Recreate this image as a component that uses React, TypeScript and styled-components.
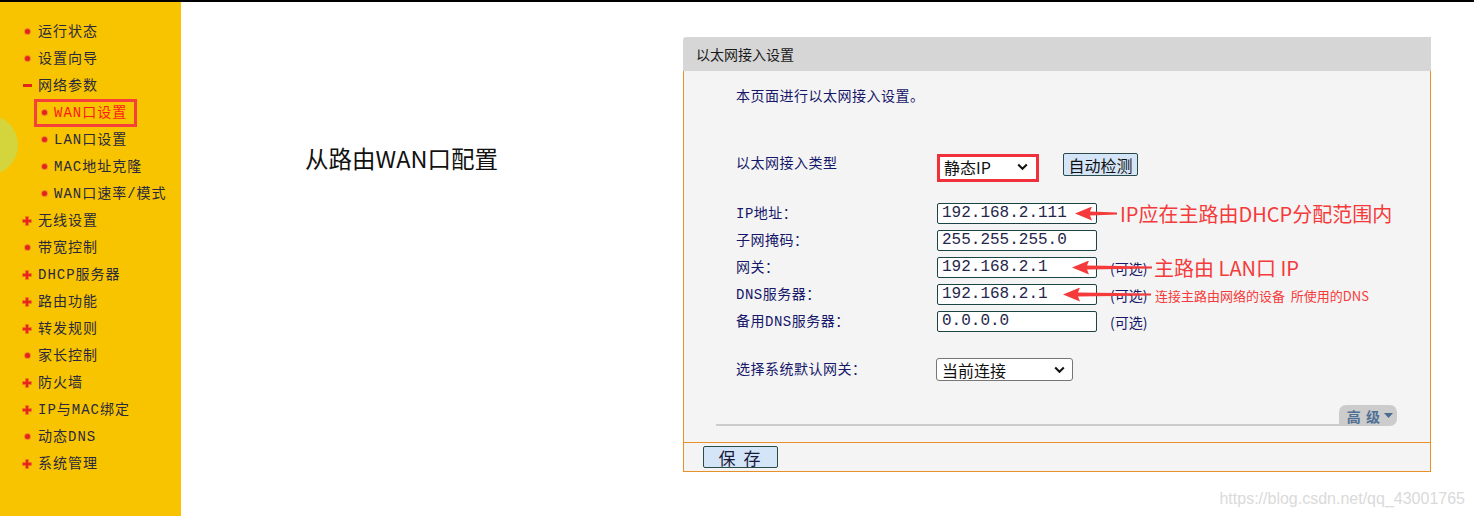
import React from 'react';
import styled, { createGlobalStyle } from 'styled-components';

const GlobalStyle = createGlobalStyle`
	html, body {
		margin: 0;
		padding: 0;
		background: #ffffff;
	}
	body {
		font-family: 'Noto Sans CJK SC', sans-serif;
	}
`;

const orange = '#e8902a';
const navy = '#16166a';
const annotationRed = '#f43a3a';

type BulletKind = 'dot' | 'plus' | 'minus';

interface MenuEntry {
	label: string;
	bullet: BulletKind;
	sub?: boolean;
	active?: boolean;
}

const menu: MenuEntry[] = [
	{ label: '运行状态', bullet: 'dot' },
	{ label: '设置向导', bullet: 'dot' },
	{ label: '网络参数', bullet: 'minus' },
	{ label: 'WAN口设置', bullet: 'dot', sub: true, active: true },
	{ label: 'LAN口设置', bullet: 'dot', sub: true },
	{ label: 'MAC地址克隆', bullet: 'dot', sub: true },
	{ label: 'WAN口速率/模式', bullet: 'dot', sub: true },
	{ label: '无线设置', bullet: 'plus' },
	{ label: '带宽控制', bullet: 'dot' },
	{ label: 'DHCP服务器', bullet: 'plus' },
	{ label: '路由功能', bullet: 'plus' },
	{ label: '转发规则', bullet: 'plus' },
	{ label: '家长控制', bullet: 'dot' },
	{ label: '防火墙', bullet: 'plus' },
	{ label: 'IP与MAC绑定', bullet: 'plus' },
	{ label: '动态DNS', bullet: 'dot' },
	{ label: '系统管理', bullet: 'plus' },
];

interface Note {
	arrowLeft: number;
	arrowLength: number;
	textLeft: number;
	text: string;
	small?: boolean;
}

interface Field {
	label: string;
	value: string;
	optional?: boolean;
	note?: Note;
}

const fields: Field[] = [
	{
		label: 'IP地址：',
		value: '192.168.2.111',
		note: { arrowLeft: 339, arrowLength: 42, textLeft: 384, text: 'IP应在主路由DHCP分配范围内' },
	},
	{ label: '子网掩码：', value: '255.255.255.0' },
	{
		label: '网关：',
		value: '192.168.2.1',
		optional: true,
		note: { arrowLeft: 336, arrowLength: 80, textLeft: 418, text: '主路由 LAN口 IP' },
	},
	{
		label: 'DNS服务器：',
		value: '192.168.2.1',
		optional: true,
		note: {
			arrowLeft: 327,
			arrowLength: 88,
			textLeft: 419,
			text: '连接主路由网络的设备\u00a0\u00a0所使用的DNS',
			small: true,
		},
	},
	{ label: '备用DNS服务器：', value: '0.0.0.0', optional: true },
];

const Bullet = ({ kind }: { kind: BulletKind }) => (
	<BulletBox>
		{kind === 'dot' && <Dot />}
		{kind === 'plus' && (
			<svg width='10' height='10' viewBox='0 0 10 10'>
				<path d='M3.5 0.5h3v3h3v3h-3v3h-3v-3h-3v-3h3z' fill='#e8261c' stroke='#f07a2a' strokeWidth='0.6' />
			</svg>
		)}
		{kind === 'minus' && <Minus />}
	</BulletBox>
);

const Chevron = () => (
	<svg width='11' height='8' viewBox='0 0 11 8'>
		<path d='M1.2 1.5 L5.5 5.8 L9.8 1.5' fill='none' stroke='#111' strokeWidth='2' />
	</svg>
);

const Annotation = ({ note }: { note: Note }) => (
	<>
		<Arrow $left={note.arrowLeft} $length={note.arrowLength} />
		{note.small ? (
			<SmallNote $left={note.textLeft}>{note.text}</SmallNote>
		) : (
			<BigNote $left={note.textLeft}>{note.text}</BigNote>
		)}
	</>
);

export default function App() {
	return (
		<Page>
			<GlobalStyle />
			<Sidebar>
				<Blob />
				<Menu>
					{menu.map((item) => (
						<MenuRow key={item.label} $sub={!!item.sub}>
							<MenuItem $active={!!item.active} $sub={!!item.sub}>
								<Bullet kind={item.bullet} />
								<MenuLabel $active={!!item.active}>{item.label}</MenuLabel>
							</MenuItem>
						</MenuRow>
					))}
				</Menu>
			</Sidebar>
			<Main>
				<Heading>从路由WAN口配置</Heading>
				<Panel>
					<PanelHeader>以太网接入设置</PanelHeader>
					<PanelBody>
						<Form>
							<Intro>本页面进行以太网接入设置。</Intro>
							<TypeRow>
								<Label>以太网接入类型</Label>
								<HighlightBox>
									<SelectText>静态IP</SelectText>
									<Chevron />
								</HighlightBox>
								<Button>自动检测</Button>
							</TypeRow>
							<FieldList>
								{fields.map((f) => (
									<FieldRow key={f.label}>
										<Label>{f.label}</Label>
										<TextInput>{f.value}</TextInput>
										{f.optional && <Optional>(可选)</Optional>}
										{f.note && <Annotation note={f.note} />}
									</FieldRow>
								))}
							</FieldList>
							<GatewayRow>
								<Label>选择系统默认网关：</Label>
								<Select>
									<SelectText>当前连接</SelectText>
									<Chevron />
								</Select>
							</GatewayRow>
						</Form>
						<AdvancedBar>
							<Rule />
							<AdvancedTab>
								高 级
								<svg width='9' height='6' viewBox='0 0 9 6'>
									<path d='M0 0h9L4.5 5z' fill='#4a6a90' />
								</svg>
							</AdvancedTab>
						</AdvancedBar>
					</PanelBody>
					<PanelFooter>
						<SaveButton>保 存</SaveButton>
					</PanelFooter>
				</Panel>
				<Watermark>https://blog.csdn.net/qq_43001765</Watermark>
			</Main>
		</Page>
	);
}

const Page = styled.div`
	display: flex;
	width: 1474px;
	height: 516px;
	box-sizing: border-box;
	border-top: 2px solid #000;
	overflow: hidden;
`;

const Sidebar = styled.aside`
	position: relative;
	width: 181px;
	flex-shrink: 0;
	background: #f8c400;
	overflow: hidden;
`;

const Blob = styled.div`
	position: absolute;
	left: -42px;
	top: 113px;
	width: 60px;
	height: 60px;
	border-radius: 50%;
	background: #d4d43c;
`;

const Menu = styled.ul`
	position: relative;
	list-style: none;
	margin: 0;
	padding: 16px 0 0;
`;

const MenuRow = styled.li<{ $sub: boolean }>`
	display: flex;
	align-items: center;
	height: 27px;
	padding-left: ${(p) => (p.$sub ? '34px' : '22px')};
`;

const MenuItem = styled.div<{ $active: boolean; $sub: boolean }>`
	display: flex;
	align-items: center;
	gap: ${(p) => (p.$sub ? '5px' : '6px')};
	box-sizing: border-box;
	height: ${(p) => (p.$sub ? '28px' : 'auto')};
	width: ${(p) => (p.$active ? '103px' : 'auto')};
	padding-left: ${(p) => (p.$sub ? '2px' : '0')};
	border: ${(p) => (p.$sub ? '3px solid' : 'none')};
	border-color: ${(p) => (p.$active ? '#f5413a' : 'transparent')};
`;

const BulletBox = styled.span`
	display: flex;
	align-items: center;
	justify-content: center;
	width: 10px;
	height: 10px;
`;

const Dot = styled.span`
	width: 5px;
	height: 5px;
	border-radius: 50%;
	background: #e3241c;
	box-shadow: 0 0 0 1px #f08a2a;
`;

const Minus = styled.span`
	width: 9px;
	height: 3px;
	background: #e3241c;
`;

const MenuLabel = styled.span<{ $active: boolean }>`
	font-family: 'Liberation Mono', 'Noto Sans CJK SC', monospace;
	font-size: 14px;
	letter-spacing: 1px;
	line-height: 20px;
	white-space: nowrap;
	color: ${(p) => (p.$active ? '#ff1a1a' : '#2a2a3c')};
`;

const Main = styled.main`
	position: relative;
	display: flex;
	flex: 1;
`;

const Heading = styled.h1`
	width: 378px;
	flex-shrink: 0;
	margin: 0;
	padding: 141px 0 0 124px;
	font-size: 23.5px;
	font-weight: 400;
	line-height: 30px;
	white-space: nowrap;
	color: #111;
`;

const Panel = styled.section`
	display: flex;
	flex-direction: column;
	width: 748px;
	margin-top: 35px;
	align-self: flex-start;
	background: #f4f4f4;
`;

const PanelHeader = styled.div`
	height: 34px;
	display: flex;
	align-items: center;
	padding-left: 13px;
	background: #d6d6d6;
	border-top-left-radius: 4px;
	font-size: 14px;
	color: #1a1a1a;
`;

const PanelBody = styled.div`
	height: 371px;
	box-sizing: border-box;
	border-left: 1px solid ${orange};
	border-right: 1px solid ${orange};
	display: flex;
	flex-direction: column;
`;

const Form = styled.div`
	padding-left: 52px;
	font-family: 'Liberation Mono', 'Noto Sans CJK SC', monospace;
	font-size: 14px;
	color: ${navy};
`;

const Intro = styled.div`
	margin-top: 16px;
	line-height: 20px;
	letter-spacing: 0.5px;
`;

const Label = styled.span`
	width: 201px;
	flex-shrink: 0;
	line-height: 20px;
	letter-spacing: 0.5px;
	white-space: nowrap;
`;

const TypeRow = styled.div`
	display: flex;
	align-items: flex-start;
	margin-top: 47px;
	height: 35px;
`;

const HighlightBox = styled.div`
	display: flex;
	align-items: center;
	justify-content: space-between;
	box-sizing: border-box;
	width: 102px;
	height: 28px;
	padding: 0 8px 2px 4px;
	border: 3px solid #f0303a;
	background: #fff;
`;

const SelectText = styled.span`
	font-family: 'Noto Sans CJK SC', sans-serif;
	font-size: 16px;
	color: #111;
	line-height: 20px;
`;

const Button = styled.div`
	display: flex;
	align-items: center;
	justify-content: center;
	box-sizing: border-box;
	width: 75px;
	height: 23px;
	margin-left: 24px;
	margin-top: -1px;
	border: 1px solid #2b4a4a;
	border-radius: 2px;
	background: #d5e5f8;
	font-family: 'Noto Sans CJK SC', sans-serif;
	font-size: 16px;
	color: #111;
`;

const FieldList = styled.div`
	display: flex;
	flex-direction: column;
	gap: 6px;
	margin-top: 14px;
`;

const FieldRow = styled.div`
	position: relative;
	display: flex;
	align-items: center;
	height: 21px;
`;

const TextInput = styled.div`
	box-sizing: border-box;
	width: 160px;
	height: 21px;
	padding-left: 4px;
	border: 1px solid #1d4444;
	border-radius: 2px;
	background: #fff;
	font-family: 'Liberation Mono', monospace;
	font-size: 16px;
	line-height: 19px;
	color: #26264a;
`;

const Optional = styled.span`
	margin-left: 13px;
	font-family: 'Noto Sans CJK SC', sans-serif;
	font-size: 14px;
	color: ${navy};
`;

const Arrow = styled.span<{ $left: number; $length: number }>`
	position: absolute;
	left: ${(p) => p.$left}px;
	top: 50%;
	width: ${(p) => p.$length}px;
	height: 14px;
	transform: translateY(-50%);
	background: ${annotationRed};
	clip-path: polygon(0 50%, 17px 0, 15px 5px, 100% 6px, 100% 8px, 15px 9px, 17px 100%);
`;

const BigNote = styled.span<{ $left: number }>`
	position: absolute;
	left: ${(p) => p.$left}px;
	top: 50%;
	transform: translateY(-52%);
	font-family: 'Noto Sans CJK SC', sans-serif;
	font-size: 20px;
	line-height: 24px;
	white-space: pre;
	color: ${annotationRed};
`;

const SmallNote = styled(BigNote)`
	font-size: 13px;
	line-height: 18px;
	transform: translateY(-45%);
`;

const GatewayRow = styled.div`
	display: flex;
	align-items: center;
	margin-top: 26px;
`;

const Select = styled.div`
	display: flex;
	align-items: center;
	justify-content: space-between;
	box-sizing: border-box;
	width: 137px;
	height: 23px;
	padding: 0 7px 0 5px;
	margin-left: -1px;
	border: 1px solid #767676;
	border-radius: 3px;
	background: #fff;
`;

const AdvancedBar = styled.div`
	display: flex;
	align-items: flex-end;
	margin: 24px 33px 0 32px;
`;

const Rule = styled.div`
	flex: 1;
	height: 2px;
	background: #cccccc;
`;

const AdvancedTab = styled.div`
	display: flex;
	align-items: center;
	gap: 3px;
	height: 21px;
	padding: 0 4px 0 8px;
	background: #cccccc;
	border-radius: 7px 7px 7px 0;
	font-family: 'Noto Sans CJK SC', sans-serif;
	font-size: 14px;
	font-weight: 700;
	letter-spacing: 1px;
	color: #4f7094;
	white-space: pre;
`;

const PanelFooter = styled.div`
	display: flex;
	align-items: flex-start;
	height: 25px;
	padding: 3px 0 0 19px;
	border: 1px solid ${orange};
`;

const SaveButton = styled(Button)`
	margin: 0;
	width: 75px;
	height: 22px;
	font-size: 17px;
	letter-spacing: 2px;
	color: #1a1a3a;
`;

const Watermark = styled.div`
	position: absolute;
	right: 9px;
	bottom: 8px;
	font-family: 'Liberation Sans', Arial, sans-serif;
	font-size: 16px;
	color: #dadada;
`;
